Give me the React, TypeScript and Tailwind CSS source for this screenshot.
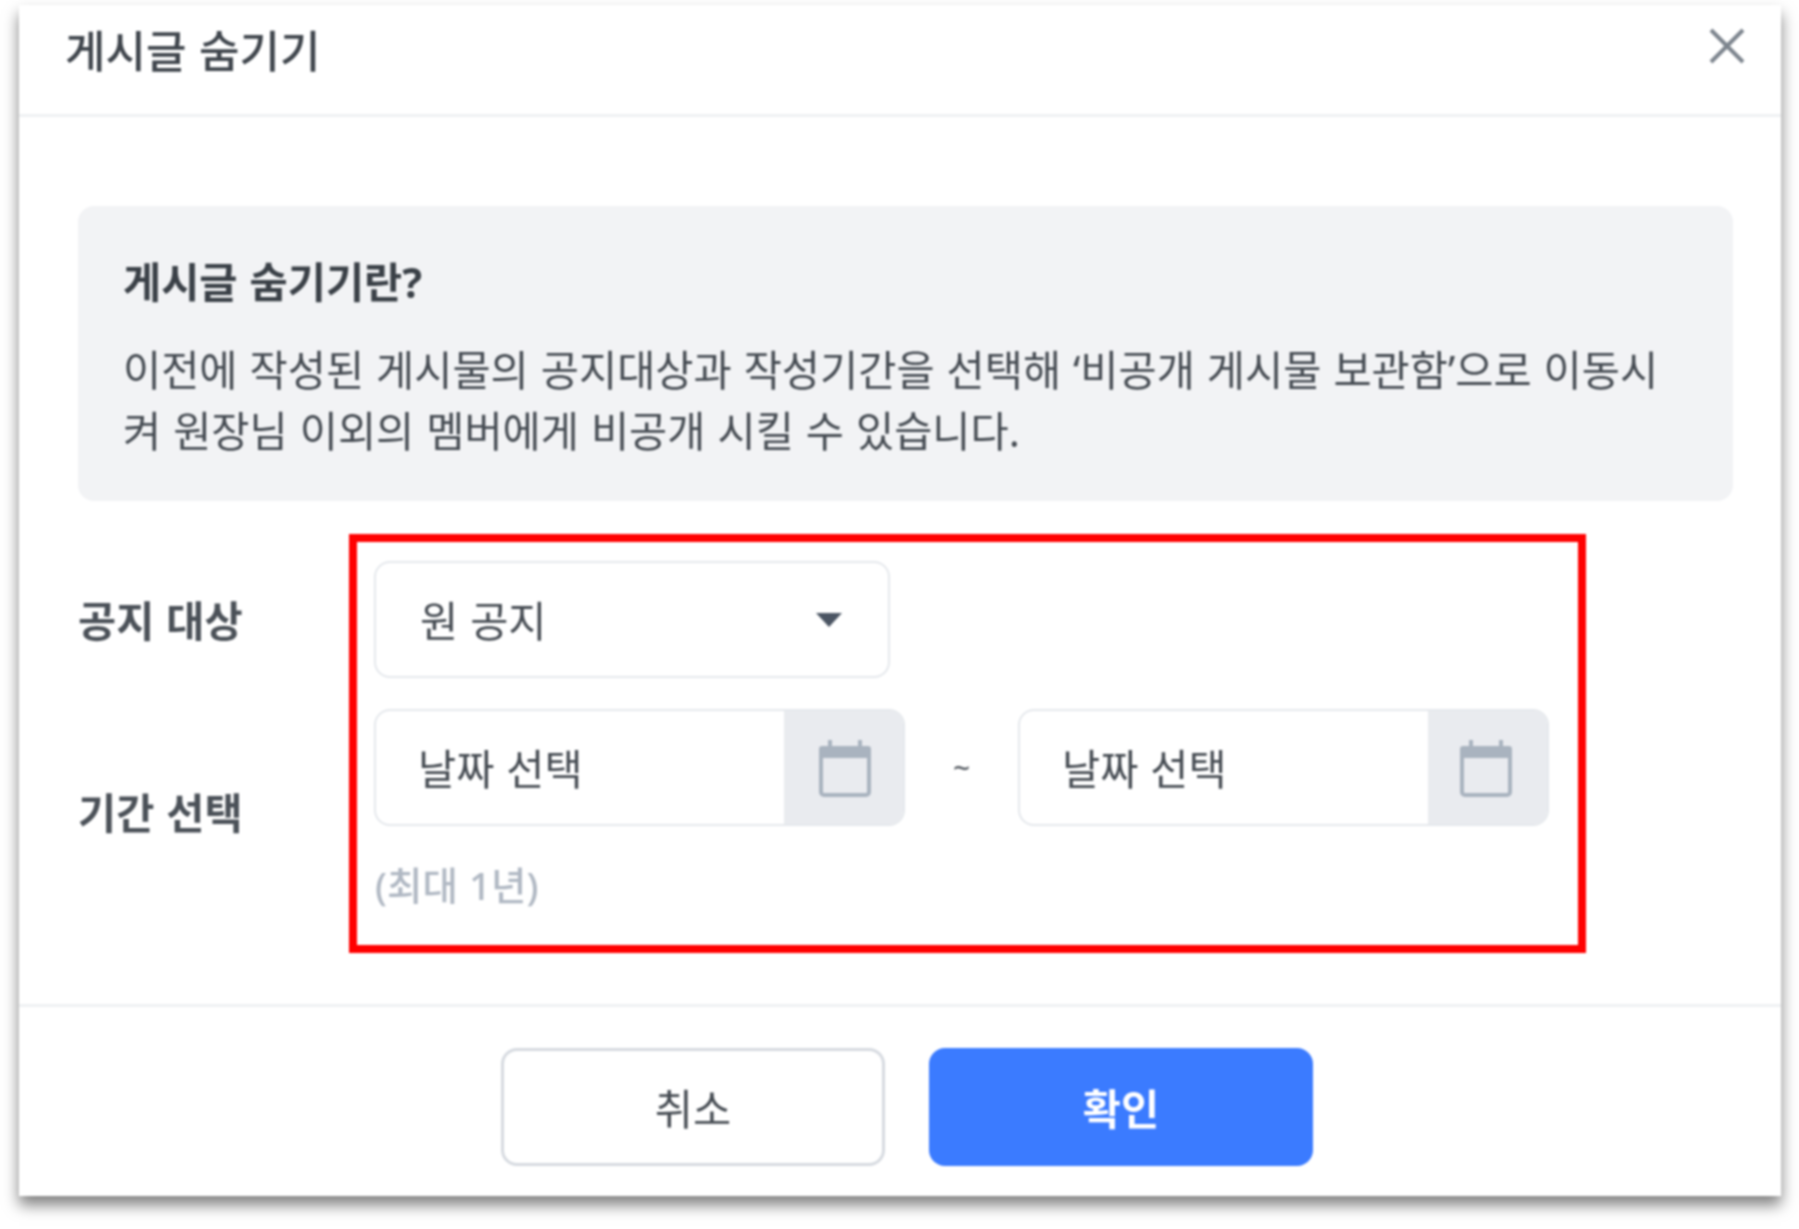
import React from 'react';

const FONT = "font-['Noto_Sans','Noto_Sans_CJK_KR',sans-serif]";

const CalendarIcon = () => (
  <svg width="52" height="57" viewBox="0 0 52 57" fill="none">
    <rect x="9" y="0" width="4" height="8" fill="#a9b3bf" />
    <rect x="39" y="0" width="4" height="8" fill="#a9b3bf" />
    <path d="M3 6h46a3 3 0 0 1 3 3v9H0V9a3 3 0 0 1 3-3z" fill="#a9b3bf" />
    <path d="M2 16v36a3 3 0 0 0 3 3h42a3 3 0 0 0 3-3V16" stroke="#a9b3bf" strokeWidth="4" />
  </svg>
);

const DateField = ({ width, iconPad }: { width: string; iconPad: string }) => (
  <div className={`${width} h-[117px] flex border-2 border-[#e5e8ec] rounded-[16px] overflow-hidden`}>
    <div className="flex-1 flex items-center pl-[42px] pt-[4px] text-[41.5px] text-[#454b52]">날짜 선택</div>
    <div className={`w-[119px] bg-[#e9ebef] flex items-center justify-center ${iconPad}`}>
      <CalendarIcon />
    </div>
  </div>
);

export default function App() {
  return (
    <div className={`${FONT} [word-spacing:1.2px] min-h-[1229px] bg-white pt-[5px] pl-[19px] blur-[1px]`}>
      <div className="w-[1762px] h-[1191px] bg-white shadow-[0_9px_14px_rgba(0,0,0,0.5)] flex flex-col">
        <header className="h-[112px] shrink-0 border-b-[3px] border-[#eff1f3] flex items-start justify-between pl-[46px] pr-[36px]">
          <h1 className="text-[44px] leading-[56px] mt-[18px] text-[#3f454c] font-medium">게시글 숨기기</h1>
          <svg className="mt-[23px]" width="36" height="36" viewBox="0 0 36 36" fill="none">
            <path d="M2 2l32 32M34 2L2 34" stroke="#7d858e" strokeWidth="4" />
          </svg>
        </header>

        <section className="flex-1 pt-[89px] px-[59px]">
          <div className="h-[295px] w-[1655px] bg-[#f2f3f5] rounded-[16px] px-[45px] pt-[51px]">
            <h2 className="text-[41.5px] leading-[50px] font-bold text-[#3a4047]">게시글 숨기기란?</h2>
            <p className="mt-[33px] text-[41.5px] leading-[61px] text-[#454b52]">
              이전에 작성된 게시물의 공지대상과 작성기간을 선택해 ‘비공개 게시물 보관함’으로 이동시켜 원장님 이외의 멤버에게 비공개 시킬 수 있습니다.
            </p>
          </div>

          <div className="flex mt-[33px]">
            <div className="w-[271px] pt-[58px] flex flex-col gap-[134px] text-[41.5px] leading-[58px] font-bold text-[#4b5158]">
              <span>공지 대상</span>
              <span>기간 선택</span>
            </div>
            <div className="w-[1237px] h-[419px] border-[8px] border-[#ff0000] pt-[19px] pl-[17px]">
              <div className="w-[516px] h-[117px] border-2 border-[#e5e8ec] rounded-[16px] flex items-center justify-between pl-[44px] pr-[46px]">
                <span className="text-[41.5px] text-[#454b52] pt-[4px]">원 공지</span>
                <svg width="26" height="14" viewBox="0 0 26 14">
                  <path d="M0 0h26L13 14z" fill="#4b5563" />
                </svg>
              </div>
              <div className="flex items-center mt-[31px]">
                <DateField width="w-[531px]" iconPad="pl-[2px] pt-[1px]" />
                <span className="w-[113px] text-center text-[30px] text-[#4b5158]">~</span>
                <DateField width="w-[531px]" iconPad="pr-[4px] pt-[1px]" />
              </div>
              <p className="mt-[34px] pl-[1px] text-[38.5px] leading-[50px] text-[#b0b8c3] font-medium">(최대 1년)</p>
            </div>
          </div>
        </section>

        <footer className="h-[192px] shrink-0 border-t-[3px] border-[#eff1f3] flex justify-center gap-[44px] pt-[41px] pl-[14px]">
          <button className="w-[384px] h-[118px] pt-[4px] border-[3px] border-[#d6dae0] rounded-[16px] text-[41.5px] text-[#454b52] bg-white">취소</button>
          <button className="w-[384px] h-[118px] pt-[4px] rounded-[16px] text-[41.5px] font-bold text-white bg-[#3b7bff]">확인</button>
        </footer>
      </div>
    </div>
  );
}
